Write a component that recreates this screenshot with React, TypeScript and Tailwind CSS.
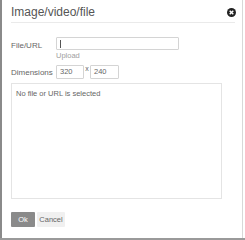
export default function App() {
  return (
    <div
      className="w-[245px] h-[240px] bg-white relative overflow-hidden"
      style={{ fontFamily: '"Liberation Sans", Arial, sans-serif' }}
    >
      <div className="absolute left-0 top-0 w-[2px] h-[240px] bg-[#8a8a8a]" />
      <div className="absolute left-[242px] top-0 w-[1px] h-[240px] bg-[#d8d8d8]" />
      <div className="absolute left-0 top-[238px] w-[245px] h-[2px] bg-[#9a9a9a]" />
      <div className="pl-[11px] pr-[9px] pt-[5px]">
        <div className="flex items-center justify-between h-[15px]">
          <span className="text-[12px] leading-[15px] text-[#555]">Image/video/file</span>
          <svg width="9" height="9" viewBox="0 0 10 10">
            <circle cx="5" cy="5" r="5" fill="#222" />
            <path d="M3 3 L7 7 M7 3 L3 7" stroke="#fff" strokeWidth="1.6" />
          </svg>
        </div>
        <div className="mt-[2px] h-[1px] bg-[#eaeaea] w-[224px]" />
        <div className="flex mt-[14px]">
          <div className="w-[45px] text-[8px] text-[#666] pt-[3px]">File/URL</div>
          <div className="flex flex-col">
            <div className="w-[123px] h-[13px] border border-[#d4d4d4] rounded-[1px] flex items-center pl-[3px]">
              <div className="w-[1px] h-[8px] bg-[#555]" />
            </div>
            <div className="text-[7.5px] text-[#a0a0a0] mt-[1px] leading-[10px]">Upload</div>
          </div>
        </div>
        <div className="flex items-center mt-[4px]">
          <div className="w-[45px] text-[8px] text-[#666] pt-[1px]">Dimensions</div>
          <div className="w-[28px] h-[14px] border border-[#d4d4d4] rounded-[1px] text-[7.5px] text-[#666] pl-[3px] leading-[12px]">320</div>
          <div className="w-[6px] text-[7px] text-[#666] text-center self-start -mt-[1px]">x</div>
          <div className="w-[29px] h-[14px] border border-[#d4d4d4] rounded-[1px] text-[7.5px] text-[#666] pl-[3px] leading-[12px]">240</div>
        </div>
        <div className="mt-[4px] w-[211px] h-[116px] border border-[#e4e4e4] px-[4px] pt-[5px]">
          <div className="text-[7.5px] text-[#666] leading-[10px]">No file or URL is selected</div>
        </div>
        <div className="flex gap-[2px] mt-[13px]">
          <div className="w-[24px] h-[15px] bg-[#8a8a8a] text-white text-[7.5px] flex items-center justify-center rounded-[1px]">Ok</div>
          <div className="w-[28px] h-[15px] bg-[#f0f0f0] text-[#666] text-[7.5px] flex items-center justify-center rounded-[1px]">Cancel</div>
        </div>
      </div>
    </div>
  );
}
